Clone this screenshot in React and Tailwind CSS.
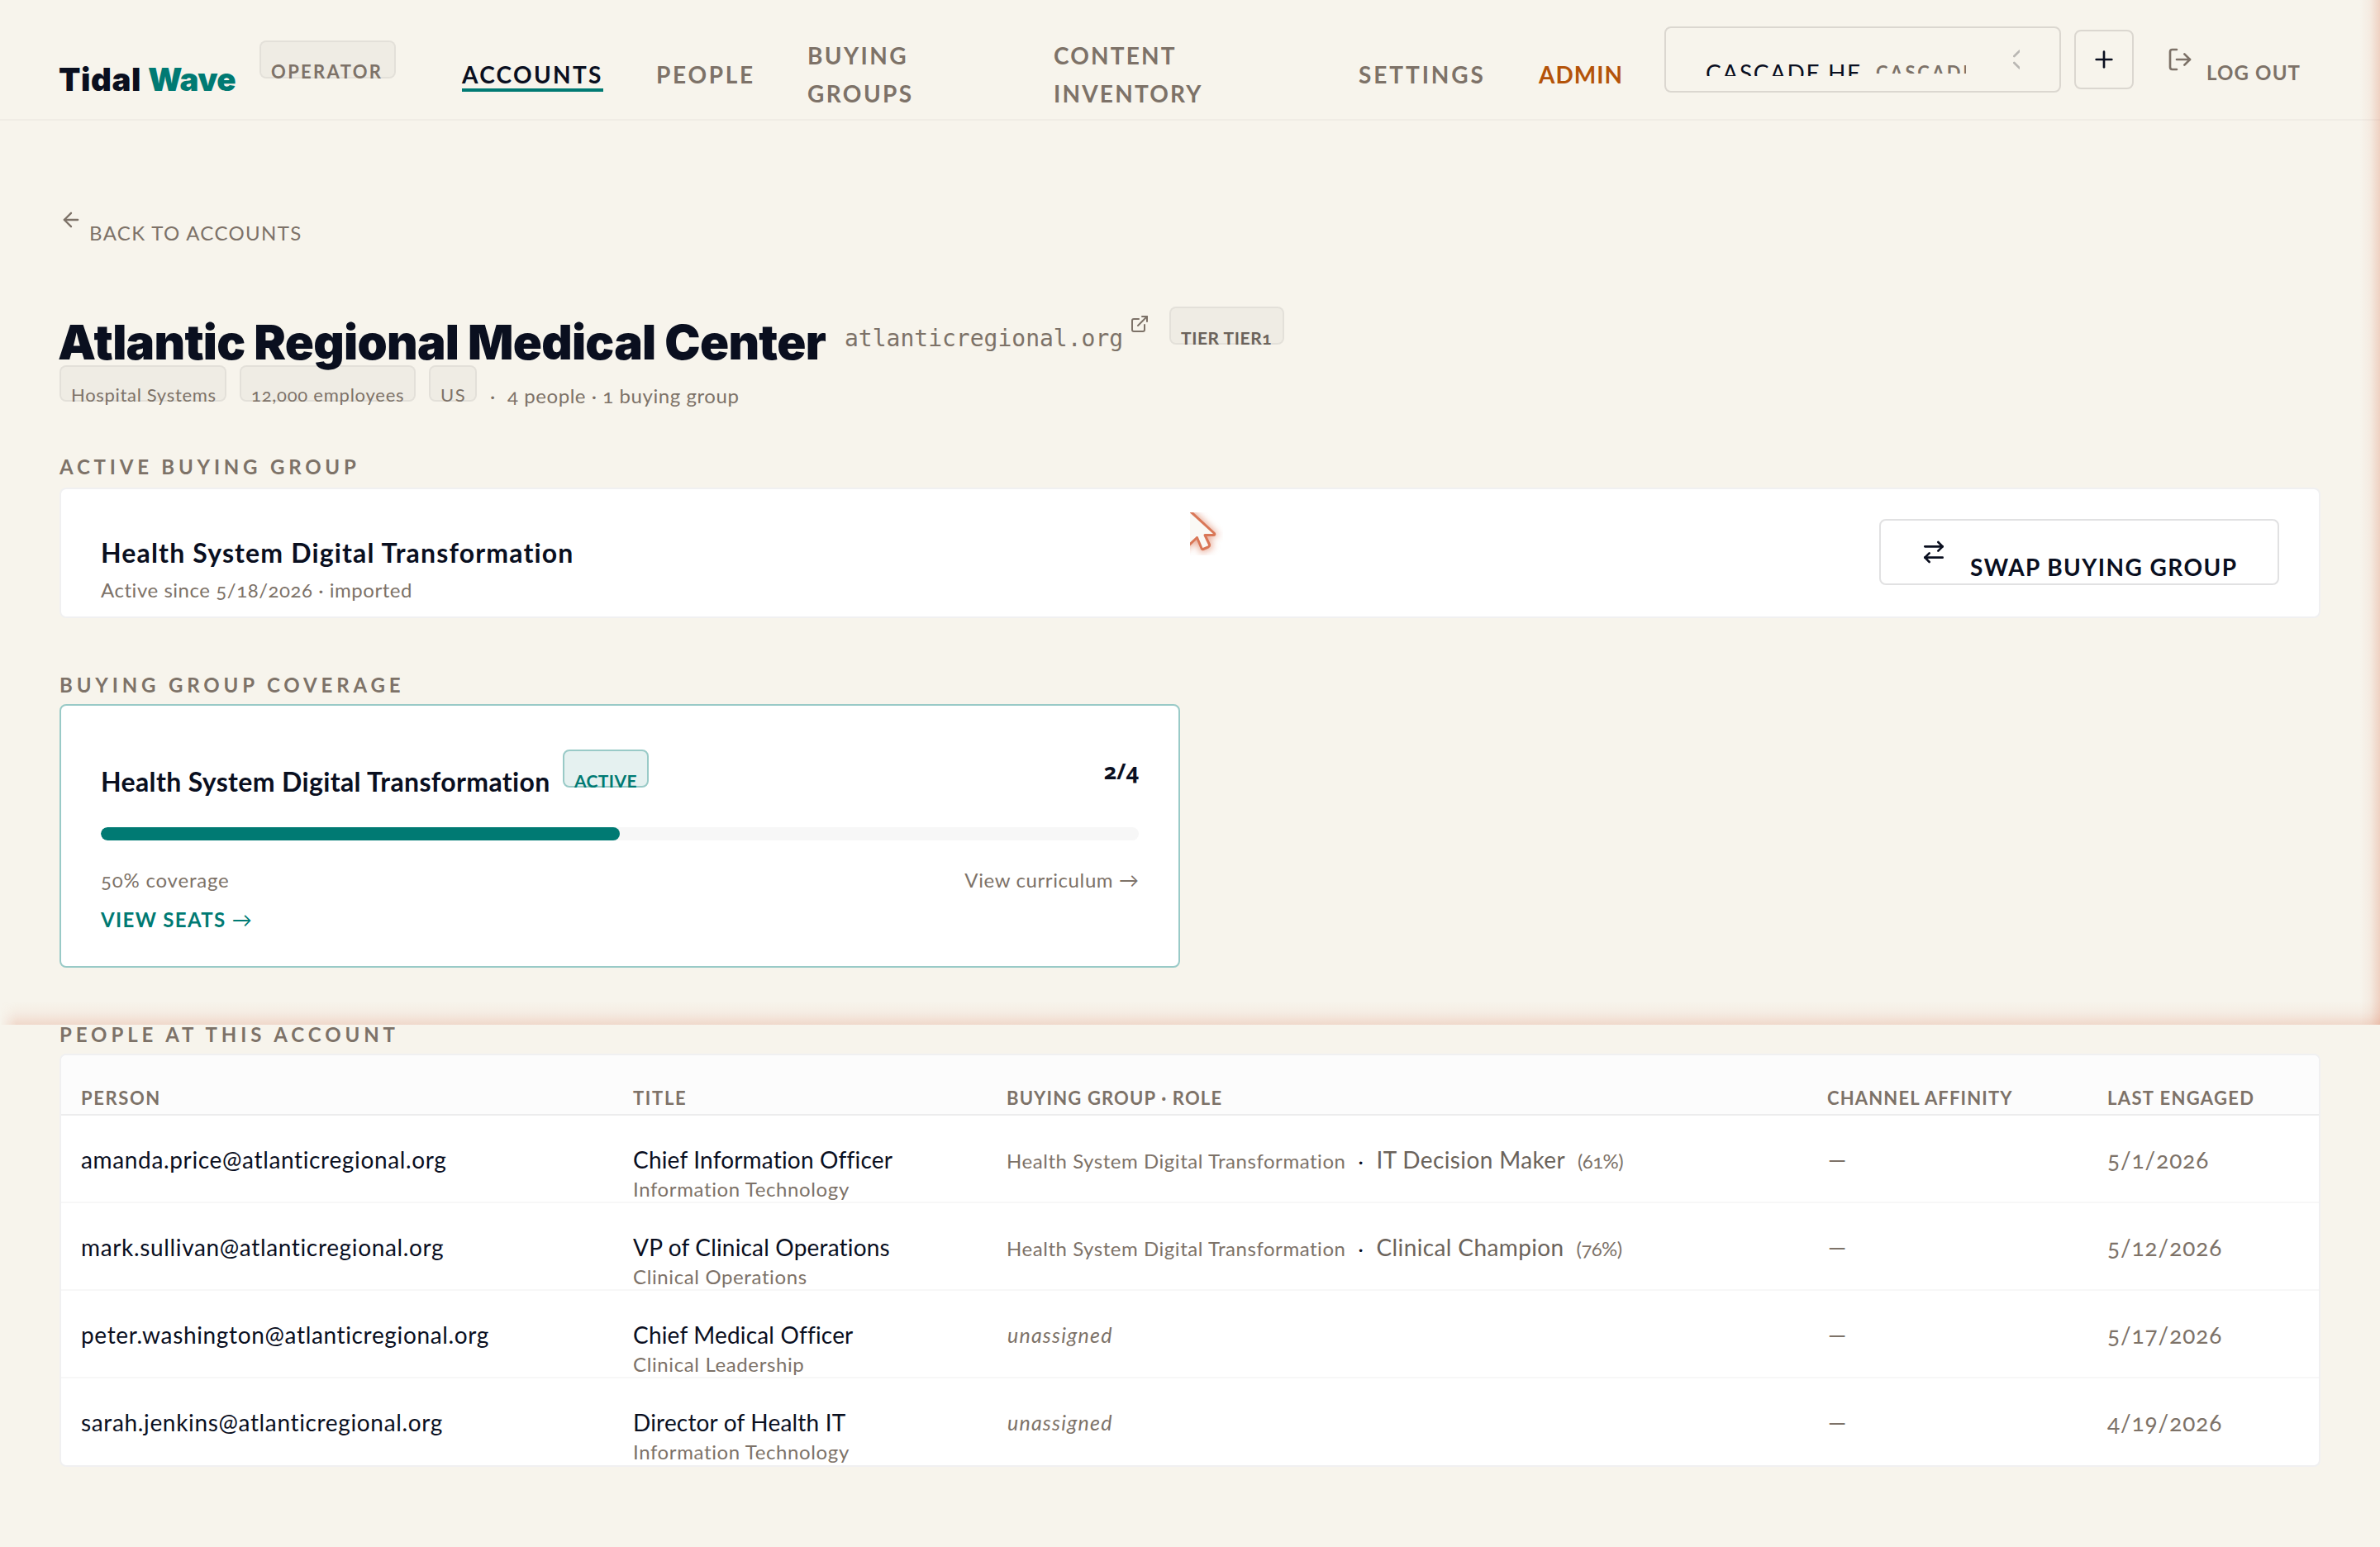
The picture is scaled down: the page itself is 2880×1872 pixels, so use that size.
import { ArrowLeft, ArrowRightLeft, ChevronsUpDown, ExternalLink, LogOut, Plus } from "lucide-react";

const people = [
    { email: "amanda.price@atlanticregional.org", title: "Chief Information Officer", department: "Information Technology", group: "Health System Digital Transformation", role: "IT Decision Maker", match: "(61%)", engaged: "5/1/2026" },
    { email: "mark.sullivan@atlanticregional.org", title: "VP of Clinical Operations", department: "Clinical Operations", group: "Health System Digital Transformation", role: "Clinical Champion", match: "(76%)", engaged: "5/12/2026" },
    { email: "peter.washington@atlanticregional.org", title: "Chief Medical Officer", department: "Clinical Leadership", engaged: "5/17/2026" },
    { email: "sarah.jenkins@atlanticregional.org", title: "Director of Health IT", department: "Information Technology", engaged: "4/19/2026" },
];

const Badge = ({ className, children }) => {
    return (
        <span className={`block shrink-0 whitespace-nowrap rounded-lg border-2 pl-3 leading-8 ${className}`}>
            {children}
        </span>
    )
}

const SectionLabel = ({ className, children }) => {
    return (
        <h2 className={`h-8 pt-px text-[24px] leading-8 font-bold text-[#7d7268] ${className}`}>{children}</h2>
    )
}

const Arrow = () => <span className="font-normal tracking-normal">→</span>

const Header = () => {
    return (
        <header className="flex h-[146px] items-start border-b-2 border-[#f0ece5] pl-[71px] font-bold text-[#7d7268]">
            <div className="mt-[72px] flex font-['Inter',sans-serif] text-[38.5px] leading-[48px] font-black text-[#0a0f1f]">
                <span className="w-[108px] tracking-[0.58px]">Tidal</span>
                <span className="w-[135px] tracking-[-0.6px] text-[#007a73]">Wave</span>
            </div>
            <Badge className="mt-[49px] h-[46px] w-[165px] border-black/5 bg-black/[0.03] pt-5 text-[22px] tracking-[2.35px]">OPERATOR</Badge>
            <nav className="ml-20 flex items-start gap-16 text-[28px] leading-[46px]">
                <a className="mt-[67px] h-11 w-[171px] border-b-4 border-[#007a73] tracking-[2.32px] text-[#0a0f1f]">ACCOUNTS</a>
                <a className="mt-[67px] w-[119px] tracking-[2.7px]">PEOPLE</a>
                <a className="mt-11 w-[234px] tracking-[2.4px]">BUYING<br />GROUPS</a>
                <a className="mt-11 w-[305px] tracking-[2.18px]">CONTENT<br />INVENTORY</a>
                <a className="mt-[67px] w-[154px] tracking-[2.9px]">SETTINGS</a>
                <a className="mt-[67px] w-[104px] tracking-[1px] text-[#b45309]">ADMIN</a>
            </nav>
            <button className="mt-8 ml-12 flex h-20 w-[480px] items-start rounded-lg border-2 border-[#dbd7d0] pl-12 text-left">
                <span className="mt-[34px] h-6 w-[187px] overflow-hidden text-[28px] leading-10 font-normal whitespace-nowrap tracking-[1.61px] text-[#0a0f1f]">CASCADE HE</span>
                <span className="mt-[38px] ml-[19px] h-[17px] w-[109px] overflow-hidden text-[22px] leading-8 whitespace-nowrap tracking-[2.8px]">CASCADE</span>
                <span className="mt-[22px] ml-[49px] h-8 w-4 overflow-hidden">
                    <ChevronsUpDown size={32} className="max-w-none text-[#b9b7b3]" />
                </span>
            </button>
            <button className="mt-9 ml-4 flex h-[72px] w-[72px] items-center justify-center rounded-lg border-2 border-[#dbd7d0] text-[#0a0f1f]">
                <Plus size={32} />
            </button>
            <button className="ml-10 flex items-start">
                <LogOut size={32} className="mt-14" />
                <span className="mt-[72px] ml-4 text-[24px] leading-8 tracking-[1.15px]">LOG OUT</span>
            </button>
        </header>
    )
}

const AccountTitle = () => {
    return (
        <div>
            <a className="flex pt-[106px] text-[24px] leading-8 tracking-[1.35px]">
                <ArrowLeft size={28} />
                <span className="mt-[14px] ml-2">BACK TO ACCOUNTS</span>
            </a>
            <div className="mt-[72px] flex h-[72px] items-start">
                <h1 className="mt-2 -ml-[2px] w-[952px] font-['Inter',sans-serif] text-[58px] leading-[72px] font-black whitespace-nowrap tracking-[-0.73px] text-[#0a0f1f]">Atlantic Regional Medical Center</h1>
                <span className="mt-5 w-[345px] font-['DejaVu_Sans_Mono',monospace] text-[28px] leading-10">atlanticregional.org</span>
                <ExternalLink size={24} className="mt-[10px]" />
                <Badge className="mt-px ml-6 h-[46px] w-[139px] border-black/5 bg-black/[0.03] pt-5 text-[21px] font-bold tracking-[0.55px] text-[#6b635b]">TIER TIER1</Badge>
            </div>
            <div className="relative flex h-11 gap-4 text-[22px]">
                <Badge className="h-11 w-[202px] border-black/5 bg-black/[0.03] pt-[18px] tracking-[0.68px]">Hospital Systems</Badge>
                <Badge className="h-11 w-[213px] border-black/5 bg-black/[0.03] pt-[18px] tracking-[0.76px]">12,000 employees</Badge>
                <Badge className="h-11 w-[58px] border-black/5 bg-black/[0.03] pt-[18px] tracking-[1.6px]">US</Badge>
                <span className="mt-[21px] w-[5px] text-[24px] leading-8">·</span>
                <span className="mt-[21px] text-[24px] leading-8 tracking-[0.56px]">4 people · 1 buying group</span>
            </div>
        </div>
    )
}

const ActiveGroup = () => {
    return (
        <div className="mt-[10px] flex h-[158px] items-start justify-between rounded-lg border-2 border-[#f0f0f1] bg-white px-12">
            <div className="pt-[55px]">
                <p className="text-[32px] leading-[44px] font-bold tracking-[1.16px] text-[#0a0f1f]">Health System Digital Transformation</p>
                <p className="mt-[7px] text-[24px] leading-8 tracking-[0.54px]">Active since 5/18/2026 · imported</p>
            </div>
            <button className="mt-9 flex h-20 w-[484px] items-start rounded-lg border-2 border-[#e1e1e2] pl-12 text-[#0a0f1f]">
                <ArrowRightLeft size={32} className="mt-[22px]" />
                <span className="mt-9 ml-7 text-[28px] leading-10 font-bold tracking-[1.42px]">SWAP BUYING GROUP</span>
            </button>
        </div>
    )
}

const CoverageCard = ({ filled, total }) => {
    return (
        <div className="mt-2 h-[319px] w-[1356px] rounded-lg border-2 border-[#99cac7] bg-white px-12 text-[24px] leading-8">
            <div className="flex h-[147px] items-start">
                <p className="mt-[70px] w-[559px] text-[32px] leading-[44px] font-bold whitespace-nowrap tracking-[0.36px] text-[#0a0f1f]">Health System Digital Transformation</p>
                <Badge className="mt-[53px] h-[46px] w-[104px] border-[#99cac7] bg-[#e5f1f0] pt-5 text-[21px] font-bold tracking-[0.4px] text-[#007a73]">ACTIVE</Badge>
                <span className="mt-[59px] ml-auto font-['Open_Sans',sans-serif] text-[27px] leading-10 font-bold text-[#0a0f1f]">{filled}/{total}</span>
            </div>
            <div className="h-4 overflow-hidden rounded-full bg-[#f7f7f7]">
                <div className="h-full rounded-full bg-[#007a73]" style={{ width: `${(filled / total) * 100}%` }}></div>
            </div>
            <div className="mt-8 flex justify-between">
                <span className="tracking-[0.8px]">50% coverage</span>
                <span className="tracking-[0.61px]">View curriculum <Arrow /></span>
            </div>
            <a className="mt-4 block font-bold tracking-[1.35px] text-[#007a73]">VIEW SEATS <Arrow /></a>
        </div>
    )
}

const PeopleTable = () => {
    return (
        <div className="mt-2 overflow-hidden rounded-lg border-2 border-[#f0f0f1] bg-white">
            <div className="grid h-[73px] grid-cols-[668px_452px_993px_339px_1fr] border-b-2 border-[#ececed] bg-[#fcfcfc] pt-9 pl-6 text-[22px] leading-8 font-bold">
                <span className="tracking-[1.6px]">PERSON</span>
                <span className="tracking-[1.66px]">TITLE</span>
                <span className="tracking-[1.15px]">BUYING GROUP · ROLE</span>
                <span className="tracking-[1.15px]">CHANNEL AFFINITY</span>
                <span className="tracking-[1.35px]">LAST ENGAGED</span>
            </div>
            {
                people.map((person, i) => {
                    return (
                        <div key={i} className="grid h-[106px] grid-cols-[668px_452px_993px_339px_1fr] border-b-2 border-[#f7f7f7] pt-[35px] pl-6 text-[28px] leading-9 last:h-[105px] last:border-b-0">
                            <span className="tracking-[0.65px] text-[#0a0f1f]">{person.email}</span>
                            <div>
                                <p className="tracking-[0.18px] text-[#0a0f1f]">{person.title}</p>
                                <p className="mt-[2px] text-[24px] leading-8 tracking-[0.62px]">{person.department}</p>
                            </div>
                            {
                                person.group ?
                                    <div className="flex items-baseline gap-[15px] text-[24px]">
                                        <span className="tracking-[0.54px]">{person.group}</span>
                                        <span className="w-[7px] text-[#0a0f1f]">·</span>
                                        <span className="text-[28px] tracking-[0.38px] text-[#6b635b]">{person.role}</span>
                                        <span className="tracking-[-0.6px]">{person.match}</span>
                                    </div>
                                    :
                                    <span className="pl-px text-[25px] tracking-[1.2px] italic">unassigned</span>
                            }
                            <span className="pl-px">—</span>
                            <span className="tracking-[0.9px]">{person.engaged}</span>
                        </div>
                    )
                })
            }
        </div>
    )
}

// Soft glow along the right and bottom edges of the shared area
const EdgeGlow = () => {
    return (
        <div className="pointer-events-none absolute top-0 left-0 h-[1240px] w-full overflow-hidden">
            <div className="absolute right-0 bottom-0 left-0 h-7 bg-linear-to-t from-[#d97757]/22 via-[#d97757]/6 to-transparent mask-l-from-[2860px]"></div>
            <div className="absolute top-0 right-0 bottom-0 w-6 bg-linear-to-l from-[#d97757]/28 via-[#d97757]/7 to-transparent"></div>
        </div>
    )
}

const Cursor = () => {
    return (
        <svg className="pointer-events-none absolute top-[620px] left-[1440px] h-[52px] w-10 overflow-hidden" viewBox="0 0 40 52">
            <defs>
                <filter id="cursor-glow" filterUnits="userSpaceOnUse" x="-40" y="-40" width="120" height="130">
                    <feGaussianBlur stdDeviation="4.5" />
                </filter>
            </defs>
            <path d="M-8 -9L29 26L18 28L24 41L15 45L9 30L-8 44Z" fill="#d97757" stroke="#d97757" strokeWidth="7" opacity="0.6" filter="url(#cursor-glow)" />
            <path d="M-8 -9L29 25Q31 27.5 28 27.5L18 27.5L23.5 39Q24 41 22 42L16 44.5Q14.5 45 14 43.5L8.5 30.5L-8 46Z" fill="#faf9f5" stroke="#d97757" strokeWidth="3" strokeLinejoin="round" />
        </svg>
    )
}

const App = () => {
    return (
        <div className="relative h-[1872px] w-[2880px] overflow-hidden bg-[#f7f4ec] font-['Lato',sans-serif] text-[#7d7268] oldstyle-nums">
            <Header />
            <main className="px-[72px]">
                <AccountTitle />
                <SectionLabel className="mt-[62px] tracking-[4.79px]">ACTIVE BUYING GROUP</SectionLabel>
                <ActiveGroup />
                <SectionLabel className="mt-16 tracking-[4.85px]">BUYING GROUP COVERAGE</SectionLabel>
                <CoverageCard filled={2} total={4} />
                <SectionLabel className="mt-16 tracking-[4.9px]">PEOPLE AT THIS ACCOUNT</SectionLabel>
                <PeopleTable />
            </main>
            <EdgeGlow />
            <Cursor />
        </div>
    )
}

export default App;
